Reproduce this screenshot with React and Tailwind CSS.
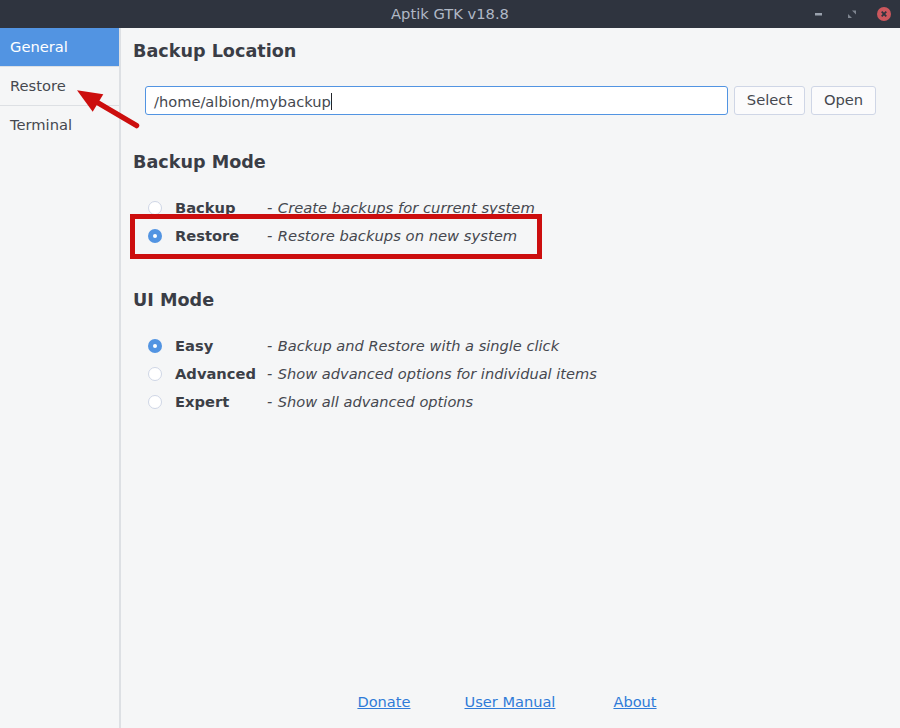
const font = { fontFamily: '"DejaVu Sans", sans-serif' };

function Radio({ checked }) {
  return checked ? (
    <span className="flex h-[14px] w-[14px] shrink-0 items-center justify-center rounded-full bg-[#5294e2]">
      <span className="h-[4px] w-[4px] rounded-full bg-white" />
    </span>
  ) : (
    <span className="block h-[14px] w-[14px] shrink-0 rounded-full border border-[#cfd6e6] bg-white" />
  );
}

function Row({ checked, label, desc, descClass }) {
  return (
    <div className="flex h-[28px] items-center pl-[15px]">
      <Radio checked={checked} />
      <span className="ml-[13px] w-[92px] text-[14.7px] font-bold text-[#3c3f47]">{label}</span>
      <span className={"italic text-[#45484f] " + descClass}>
        <span className="mr-[5.5px]">-</span>
        {desc}
      </span>
    </div>
  );
}

function Heading({ children, className }) {
  return <h2 className={"text-[17.6px] leading-[22px] font-bold text-[#3a3d46] " + className}>{children}</h2>;
}

function NavItem({ active, last, children }) {
  const border = last ? "" : " border-b border-[#dde0e4]";
  return active ? (
    <div className={"flex h-[39px] items-center bg-[#5294e2] pl-[10px] text-[14.7px] text-white" + border}>{children}</div>
  ) : (
    <div className={"flex h-[39px] items-center pl-[10px] text-[14.7px] text-[#45484f]" + border}>{children}</div>
  );
}

function Button({ children, className }) {
  return (
    <button className={"h-[29px] rounded-[3px] border border-[#cfd6e6] bg-[#fbfbfc] text-[14.7px] text-[#45484f] " + className}>
      {children}
    </button>
  );
}

export default function App() {
  return (
    <div style={font} className="relative flex h-[728px] w-[900px] flex-col overflow-hidden bg-[#f5f6f7]">
      <header className="relative flex h-[28px] shrink-0 items-center justify-center bg-[#2f343f] text-[14.7px] text-[#afb8c6]">
        Aptik GTK v18.8
        <div className="absolute right-[9px] top-[7px] flex items-center">
          <svg width="14" height="14" viewBox="0 0 14 14" className="mr-[19px]">
            <rect x="3" y="6" width="7" height="2.5" fill="#9aa1ad" />
          </svg>
          <svg width="14" height="14" viewBox="0 0 14 14" className="mr-[18px]">
            <path d="M7 3.5h4v4z M3 7l4 4H3z" fill="#7f8590" />
          </svg>
          <svg width="14" height="14" viewBox="0 0 14 14">
            <circle cx="7" cy="7" r="7" fill="#cc575d" />
            <path d="M4.7 4.7l4.6 4.6M9.3 4.7l-4.6 4.6" stroke="#2f343f" strokeWidth="1.8" />
          </svg>
        </div>
      </header>

      <div className="flex min-h-0 flex-1">
        <nav className="w-[121px] shrink-0 border-r-2 border-[#dde0e4]">
          <NavItem active>General</NavItem>
          <NavItem>Restore</NavItem>
          <NavItem last>Terminal</NavItem>
        </nav>

        <main className="flex min-w-0 flex-1 flex-col pl-[12px] pr-[24px]">
          <Heading className="mt-[12px]">Backup Location</Heading>
          <div className="mt-[24px] flex gap-[6px] pl-[12px]">
            <div className="flex h-[29px] flex-1 items-center rounded-[3px] border border-[#5294e2] bg-white pl-[8px] pt-[2px] text-[14.65px] text-[#45484f]">
              /home/albion/mybackup
              <span className="h-[17px] w-px bg-[#22252b]" />
            </div>
            <Button className="w-[71px]">Select</Button>
            <Button className="w-[65px]">Open</Button>
          </div>

          <Heading className="mt-[36px]">Backup Mode</Heading>
          <div className="mt-[21px]">
            <Row descClass="text-[14.75px]" label="Backup" desc="Create backups for current system" />
            <Row descClass="text-[14.75px]" checked label="Restore" desc="Restore backups on new system" />
          </div>

          <Heading className="mt-[39px]">UI Mode</Heading>
          <div className="mt-[21px]">
            <Row descClass="text-[14.6px]" checked label="Easy" desc="Backup and Restore with a single click" />
            <Row descClass="text-[14.6px]" label="Advanced" desc="Show advanced options for individual items" />
            <Row descClass="text-[14.6px]" label="Expert" desc="Show all advanced options" />
          </div>

          <footer className="mt-auto mb-[15px] flex justify-center gap-[54px] pl-[5px] text-[14.6px] text-[#2f7bd8]">
            <a className="underline">Donate</a>
            <a className="underline">User Manual</a>
            <a className="ml-[4px] underline">About</a>
          </footer>
        </main>
      </div>

      <div className="absolute left-[130px] top-[214px] h-[45px] w-[412px] border-[5px] border-[#cc0e0e]" />
      <svg className="absolute left-[70px] top-[85px]" width="75" height="50" viewBox="0 0 75 50">
        <path d="M7 5.3 L33.3 9.3 L22.7 26.7 Z" fill="#cc0e0e" />
        <path d="M24 15.5 L66.5 40.5" stroke="#cc0e0e" strokeWidth="5.5" strokeLinecap="round" />
      </svg>
    </div>
  );
}
